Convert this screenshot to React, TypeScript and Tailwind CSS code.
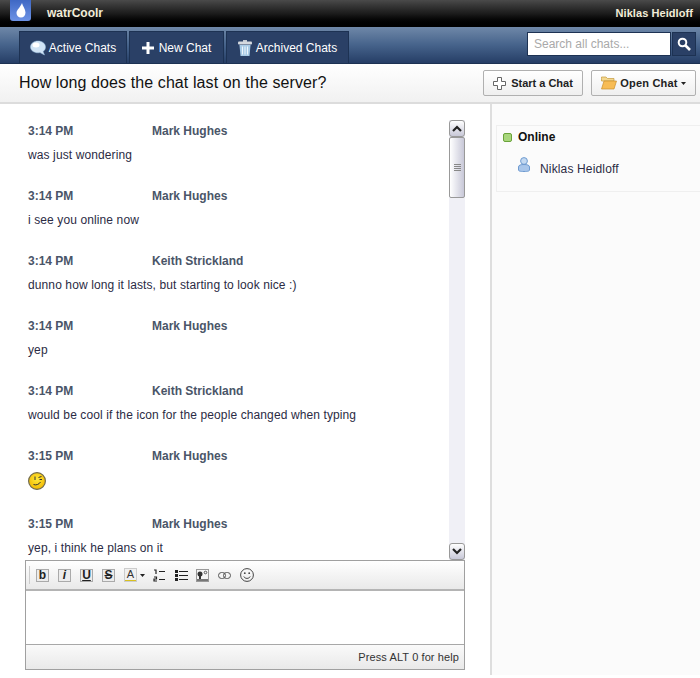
import React from 'react';

const messages = [
  { time: '3:14 PM', name: 'Mark Hughes', text: 'was just wondering' },
  { time: '3:14 PM', name: 'Mark Hughes', text: 'i see you online now' },
  { time: '3:14 PM', name: 'Keith Strickland', text: 'dunno how long it lasts, but starting to look nice :)' },
  { time: '3:14 PM', name: 'Mark Hughes', text: 'yep' },
  { time: '3:14 PM', name: 'Keith Strickland', text: 'would be cool if the icon for the people changed when typing' },
  { time: '3:15 PM', name: 'Mark Hughes', text: '' },
  { time: '3:15 PM', name: 'Mark Hughes', text: 'yep, i think he plans on it' },
];

const Drop = () => (
  <div className="ml-[10px] flex h-[21px] w-[21px] items-center justify-center rounded-b-[3px] bg-gradient-to-b from-[#3f68c4] to-[#6d93e6]">
    <svg width="10" height="15" viewBox="0 0 10 15">
      <path d="M6 0C6.5 3 9.5 6 9.5 9.5C9.5 12.6 7.6 14.5 5 14.5C2.4 14.5 .5 12.6 .5 10C.5 7 4.5 4 6 0Z" fill="#fff" />
    </svg>
  </div>
);

const Bubble = () => (
  <svg width="16" height="16" viewBox="0 0 16 16">
    <path d="M8 1C12 1 15.5 3.5 15.5 7C15.5 9 14.5 10.5 13 11.5L14.5 15L10 12.6C5 13.5 .5 11 .5 7C.5 3.5 4 1 8 1Z" fill="#cfe3f5" stroke="#9dc0e0" strokeWidth=".5" />
    <ellipse cx="6" cy="5" rx="3.5" ry="2.5" fill="#fff" />
  </svg>
);

const Plus = () => (
  <svg width="12" height="12" viewBox="0 0 12 12">
    <path d="M4.5 0H7.5V4.5H12V7.5H7.5V12H4.5V7.5H0V4.5H4.5Z" fill="#fff" />
  </svg>
);

const Trash = () => (
  <svg width="14" height="16" viewBox="0 0 14 16">
    <rect x="5" y="0" width="4" height="2" fill="#c5cbd3" />
    <rect x="0" y="1.5" width="14" height="3" rx="1" fill="#d5d9df" />
    <path d="M1.5 5H12.5L11.5 16H2.5Z" fill="#a9cbe6" />
    <path d="M4.5 6.5V14.5M7 6.5V14.5M9.5 6.5V14.5" stroke="#eef5fb" strokeWidth="1" />
  </svg>
);

const Search = () => (
  <svg width="14" height="14" viewBox="0 0 14 14">
    <circle cx="5.5" cy="5.5" r="3.8" fill="none" stroke="#fff" strokeWidth="2" />
    <path d="M8.5 8.5L13 13" stroke="#fff" strokeWidth="2.6" />
  </svg>
);

const OutlinePlus = () => (
  <svg width="13" height="13" viewBox="0 0 13 13">
    <path d="M4.5 .5H8.5V4.5H12.5V8.5H8.5V12.5H4.5V8.5H.5V4.5H4.5Z" fill="#fff" stroke="#666" />
  </svg>
);

const Folder = () => (
  <svg width="16" height="14" viewBox="0 0 16 14">
    <path d="M.5 2.5V1H5L6.5 2.5H13V5H.5Z" fill="#f3d78e" stroke="#c49a3c" strokeWidth=".7" />
    <path d="M3 5H15.5L13 13H.5Z" fill="#f7bc55" stroke="#c98f2d" strokeWidth=".7" />
  </svg>
);

const Caret = ({ color = '#222' }: { color?: string }) => (
  <svg width="5" height="3" viewBox="0 0 5 3">
    <path d="M0 0H5L2.5 3Z" fill={color} />
  </svg>
);

const Chevron = ({ up }: { up?: boolean }) => (
  <svg width="10" height="7" viewBox="0 0 10 7">
    <path d={up ? 'M1 6L5 2L9 6' : 'M1 1L5 5L9 1'} fill="none" stroke="#222" strokeWidth="2.2" />
  </svg>
);

const Wink = () => (
  <svg width="18" height="18" viewBox="0 0 18 18">
    <defs>
      <radialGradient id="wink" cx="50%" cy="40%" r="60%">
        <stop offset="0%" stopColor="#ffe93a" />
        <stop offset="100%" stopColor="#f2b800" />
      </radialGradient>
    </defs>
    <circle cx="9" cy="9" r="8.4" fill="url(#wink)" stroke="#6f6a50" strokeWidth="1.2" />
    <path d="M7 4.5V8M10.5 5.5L13.5 4.5M11.5 7.5H14" stroke="#333" strokeWidth="1" fill="none" />
    <path d="M5.5 12.5C8 13.5 11 12.5 12.5 10" stroke="#333" strokeWidth="1" fill="none" />
  </svg>
);

const Person = () => (
  <svg width="12" height="15" viewBox="0 0 12 15">
    <circle cx="6" cy="4" r="3.4" fill="#c4d9f1" stroke="#6f9bd0" />
    <path d="M.5 13C.5 14 2 14.5 6 14.5C10 14.5 11.5 14 11.5 13V10C11.5 8 9 7.5 6 7.5C3 7.5 .5 8 .5 10Z" fill="#a9c6ea" stroke="#6f9bd0" />
  </svg>
);

const ToolBox = ({ children }: { children: React.ReactNode }) => (
  <div className="flex h-[13px] w-[13px] items-center justify-center border border-[#aaa] bg-[#ececec] text-[12px] font-bold leading-none text-[#222]">
    {children}
  </div>
);

const Toolbar = () => (
  <div className="flex h-[30px] items-center border-b-2 border-[#b4b4b4] bg-gradient-to-b from-white to-[#e9e9e9] pl-[3px]">
    <div className="mr-[6px] h-[18px] w-px bg-[#ccc]" />
    <div className="flex items-center gap-[9px]">
      <ToolBox>b</ToolBox>
      <ToolBox><i>i</i></ToolBox>
      <ToolBox><u>U</u></ToolBox>
      <ToolBox><s>S</s></ToolBox>
    </div>
    <div className="ml-[9px] flex items-center gap-[3px]">
      <div className="flex h-[14px] w-[13px] flex-col items-center border border-[#ccc] bg-[#f0f0f0] text-[11px] leading-[11px] text-[#333]">
        A
        <div className="h-[2px] w-full bg-[#d8c020]" />
      </div>
      <Caret />
    </div>
    <svg className="ml-[8px]" width="12" height="13" viewBox="0 0 12 13">
      <path d="M1 1H3V5M1 8H3.5V10H1V12H4M6 2.5H12M6 10.5H12" fill="none" stroke="#222" strokeWidth="1.2" />
    </svg>
    <svg className="ml-[10px]" width="13" height="11" viewBox="0 0 13 11">
      <path d="M0 0H3V3H0ZM0 4H3V7H0ZM0 8H3V11H0Z" fill="#222" />
      <path d="M4 1.5H13M4 5.5H13M4 9.5H13" stroke="#222" />
    </svg>
    <svg className="ml-[8px]" width="13" height="13" viewBox="0 0 13 13">
      <rect x=".5" y=".5" width="12" height="12" fill="#f4f4f4" stroke="#999" />
      <circle cx="4" cy="5" r="2.5" fill="#333" />
      <rect x="3" y="6" width="2" height="5" fill="#333" />
      <rect x="1" y="10" width="11" height="2" fill="#777" />
      <circle cx="9.5" cy="3.5" r="1.3" fill="none" stroke="#555" />
    </svg>
    <svg className="ml-[9px]" width="13" height="9" viewBox="0 0 13 9">
      <rect x=".5" y="1.5" width="7" height="6" rx="3" fill="none" stroke="#555" />
      <rect x="5.5" y="1.5" width="7" height="6" rx="3" fill="none" stroke="#555" />
    </svg>
    <svg className="ml-[9px]" width="14" height="14" viewBox="0 0 14 14">
      <circle cx="7" cy="7" r="6.4" fill="none" stroke="#444" />
      <circle cx="4.8" cy="5.2" r=".9" fill="#444" />
      <circle cx="9.2" cy="5.2" r=".9" fill="#444" />
      <path d="M3.8 8.5C5 11 9 11 10.2 8.5" fill="none" stroke="#444" />
    </svg>
  </div>
);

function Tab({ icon, label, w }: { icon: React.ReactNode; label: string; w: string }) {
  return (
    <div className={`flex h-[32px] items-center justify-center gap-[3px] border border-b-0 border-[#1d3253] bg-[#2a4066] text-[12px] text-white ${w}`}>
      {icon}
      {label}
    </div>
  );
}

export default function App() {
  return (
    <div className="flex h-[678px] w-[700px] flex-col overflow-hidden bg-white font-['Liberation_Sans',sans-serif] text-[12px] text-[#222]">
      {/* top bar */}
      <div className="flex h-[27px] bg-gradient-to-b from-[#4a4a4a] via-[#1c1c1c] to-black pr-[7px]">
        <Drop />
        <span className="ml-[16px] mt-[6px] text-[12px] font-bold leading-[14px] text-[#f2ecd8]">watrCoolr</span>
        <span className="ml-auto mt-[6px] text-[11px] font-bold leading-[14px] tracking-[0.07px] text-[#f2ecd8]">Niklas Heidloff</span>
      </div>

      {/* nav */}
      <div className="flex h-[37px] items-end border-b border-[#1d3253] bg-gradient-to-b from-[#6f88a8] via-[#46638b] to-[#263e66] pl-[19px] pr-[4px]">
        <div className="flex gap-[2px]">
          <Tab icon={<Bubble />} label="Active Chats" w="w-[108px]" />
          <Tab icon={<span className="mr-[2px] flex"><Plus /></span>} label="New Chat" w="w-[95px]" />
          <Tab icon={<span className="mr-[1px] flex"><Trash /></span>} label="Archived Chats" w="w-[123px]" />
        </div>
        <div className="mb-[7px] ml-auto flex h-[24px] gap-[1px]">
          <div className="flex w-[144px] items-center border border-[#1d3253] bg-white pl-[6px] text-[12px] text-[#a9a9a9]">Search all chats...</div>
          <div className="flex w-[24px] items-center justify-center border border-[#1d3253] bg-[#2a4066]"><Search /></div>
        </div>
      </div>

      {/* title row */}
      <div className="flex h-[40px] items-center border-b-2 border-[#dcdcdc] bg-gradient-to-b from-white to-[#f1f1f1] pl-[19px] pr-[4px]">
        <h1 className="text-[16px] leading-[20px] tracking-[0.1px] text-[#111]">How long does the chat last on the server?</h1>
        <button className="ml-auto flex h-[26px] w-[100px] items-center justify-center gap-[5px] rounded-[2px] border border-[#b0b0b0] bg-gradient-to-b from-white to-[#efefef] text-[11px] font-bold text-[#222]">
          <OutlinePlus />Start a Chat
        </button>
        <button className="ml-[8px] flex h-[26px] w-[105px] items-center justify-center gap-[3px] rounded-[2px] border border-[#b0b0b0] bg-gradient-to-b from-white to-[#efefef] text-[11px] font-bold tracking-[0.2px] text-[#222]">
          <Folder />Open Chat<Caret />
        </button>
      </div>

      <div className="flex h-[571px]">
        {/* chat column */}
        <div className="flex w-[492px] flex-col border-r-2 border-[#dedede] pl-[25px] pr-[25px] pt-[16px]">
          <div className="flex h-[440px] overflow-hidden">
            <div className="flex-1 overflow-hidden pl-[3px] pt-[4px]">
              {messages.map((m, i) => (
                <div key={i} className={m.text ? 'h-[65px]' : 'h-[68px]'}>
                  <div className="flex h-[14px] items-center text-[12px] font-bold leading-[14px] text-[#4a5568]">
                    <span className="w-[124px]">{m.time}</span>
                    <span>{m.name}</span>
                  </div>
                  {m.text ? (
                    <p className="mt-[10px] text-[12px] leading-[14px] tracking-[0.11px] text-[#2b2b44]">{m.text}</p>
                  ) : (
                    <div className="mt-[9px]"><Wink /></div>
                  )}
                </div>
              ))}
            </div>
            <div className="flex w-[16px] flex-col bg-[#f0f0f6]">
              <div className="flex h-[17px] items-center justify-center rounded-[3px] border border-[#999] bg-gradient-to-b from-white to-[#c8c8d8]"><Chevron up /></div>
              <div className="flex h-[61px] flex-col items-center justify-center gap-[1px] rounded-[2px] border border-[#999] bg-gradient-to-r from-white to-[#c8c8d8]">
                <div className="h-px w-[7px] bg-[#888]" />
                <div className="h-px w-[7px] bg-[#888]" />
                <div className="h-px w-[7px] bg-[#888]" />
                <div className="h-px w-[7px] bg-[#888]" />
              </div>
              <div className="flex-1" />
              <div className="flex h-[17px] items-center justify-center rounded-[3px] border border-[#999] bg-gradient-to-b from-white to-[#c8c8d8]"><Chevron /></div>
            </div>
          </div>

          {/* editor */}
          <div className="h-[110px] border border-[#a0a0a0]">
            <Toolbar />
            <div className="h-[54px] border-b border-[#a8a8a8] bg-white" />
            <div className="flex h-[24px] items-center justify-end bg-gradient-to-b from-[#fafafa] to-[#e9e9e9] pr-[5px] text-[11px] tracking-[0.1px] text-[#333]">Press ALT 0 for help</div>
          </div>
        </div>

        {/* people */}
        <div className="flex-1 bg-[#fbfbfb] pl-[4px] pt-[21px]">
          <div className="h-[67px] border border-r-0 border-[#efefef] pl-[6px] pt-[4px]">
            <div className="flex items-center gap-[6px] text-[12px] font-bold leading-[14px] text-[#111]">
              <div className="h-[9px] w-[9px] rounded-[2px] border border-[#6aa33a] bg-[#a8d67c]" />
              Online
            </div>
            <div className="ml-[15px] mt-[13px] flex items-start gap-[10px] text-[12px] leading-[14px] tracking-[0.15px] text-[#2b2b44]">
              <Person />
              <span className="mt-[5px]">Niklas Heidloff</span>
            </div>
          </div>
        </div>
      </div>
    </div>
  );
}
